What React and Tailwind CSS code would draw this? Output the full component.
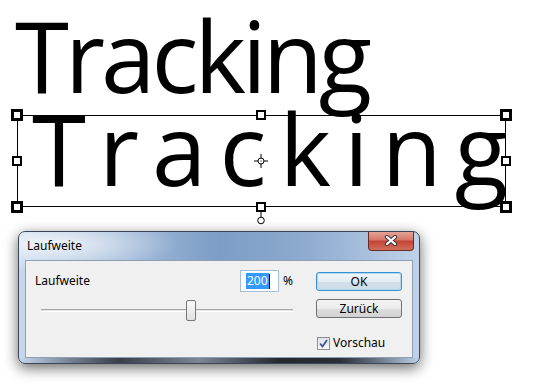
import React from 'react';

const Handle = ({ className }) => (
  <div className={`absolute bg-white border-black ${className}`} />
);

const CloseX = () => (
  <svg width="14" height="11" viewBox="0 0 14 11">
    <path d="M3 2 L11 9 M11 2 L3 9" stroke="#3a3a3a" strokeWidth="4.2" strokeLinecap="round" />
    <path d="M3 2 L11 9 M11 2 L3 9" stroke="#ffffff" strokeWidth="2.2" strokeLinecap="round" />
  </svg>
);

const Check = () => (
  <svg width="9" height="9" viewBox="0 0 9 9">
    <path d="M1 4.5 L3.5 7.5 L8 1" fill="none" stroke="#3f5592" strokeWidth="1.8" />
  </svg>
);

export default function App() {
  return (
    <div className="w-[537px] h-[388px] bg-white overflow-hidden flex flex-col font-['Open_Sans',sans-serif] text-black">
      <div className="pl-[15px] pt-[6px] h-[104px] shrink-0 text-[98px] leading-[98px] tracking-[-4px] whitespace-nowrap">
        Tracking
      </div>

      <div className="relative ml-[17px] mt-[11px] w-[489px] h-[92px] border border-black shrink-0">
        <div className="-mt-[3px] pl-[14px] text-[98px] leading-[70px] tracking-[13px] whitespace-nowrap">
          Tracking
        </div>
        <Handle className="-left-[7px] -top-[7px] w-[12px] h-[12px] border-[3px]" />
        <Handle className="-right-[7px] -top-[7px] w-[12px] h-[12px] border-[3px]" />
        <Handle className="-left-[7px] -bottom-[7px] w-[12px] h-[12px] border-[3px]" />
        <Handle className="-right-[7px] -bottom-[7px] w-[12px] h-[12px] border-[3px]" />
        <Handle className="left-[238px] -top-[6px] w-[10px] h-[10px] border-2" />
        <Handle className="left-[238px] -bottom-[6px] w-[10px] h-[10px] border-2" />
        <Handle className="-left-[6px] top-[40px] w-[10px] h-[10px] border-2" />
        <Handle className="-right-[6px] top-[40px] w-[10px] h-[10px] border-2" />
        <svg className="absolute left-[236px] top-[38px]" width="14" height="14" viewBox="0 0 14 14">
          <circle cx="7" cy="7" r="3" fill="none" stroke="black" strokeWidth="1" />
          <path d="M7 0 V4 M7 10 V14 M0 7 H4 M10 7 H14" stroke="black" strokeWidth="1" />
          <rect x="6.5" y="6.5" width="1" height="1" fill="black" />
        </svg>
        <svg className="absolute left-[238px] top-[95px]" width="10" height="14" viewBox="0 0 10 14">
          <path d="M5 0 V6" stroke="black" strokeWidth="1" />
          <circle cx="5" cy="9.5" r="3.3" fill="white" stroke="black" strokeWidth="1" />
        </svg>
      </div>

      <div className="relative ml-[18px] mt-[24px] w-[402px] h-[133px] shrink-0 rounded-[7px] border border-[#3b4656] shadow-[0_4px_14px_rgba(0,0,0,0.6)] bg-[linear-gradient(to_right,#c6d7ec_0%,#aac1de_22%,#7c9dc6_50%,#8eabd0_72%,#c0d2e8_100%)] flex flex-col overflow-hidden font-['Noto_Sans',sans-serif] text-[12px]">
        <div className="absolute left-0 top-0 w-[160px] h-[40px] bg-[radial-gradient(ellipse_at_20%_30%,rgba(255,255,255,0.75),rgba(255,255,255,0)_70%)]" />
        <div className="relative h-[28px] flex items-start justify-between shrink-0">
          <span className="ml-[8px] mt-[5px]">Laufweite</span>
          <div className="mr-[5px] -mt-px w-[46px] h-[20px] rounded-b-[4px] border border-[#6b2a22] border-t-0 bg-[linear-gradient(to_bottom,#e6a89b_0%,#d77a6c_45%,#c44535_55%,#d0705a_100%)] flex items-center justify-center">
            <CloseX />
          </div>
        </div>

        <div className="relative mx-[6px] h-[98px] shrink-0 border border-[#8ea0b6] bg-[#f0f0f0] flex pl-[9px]">
          <div className="w-[265px] flex flex-col">
            <div className="mt-[9px] h-[22px] flex items-center">
              <span className="w-[205px]">Laufweite</span>
              <div className="w-[39px] h-[22px] border border-[#a4bfdc] bg-white flex items-center pl-[5px]">
                <span className="bg-[#3399ff] text-white leading-[16px] px-[1px]">200</span>
                <span className="w-px h-[15px] bg-black" />
              </div>
              <span className="ml-[4px]">%</span>
            </div>
            <div className="relative mt-[8px] ml-[6px] w-[252px] h-[21px] flex items-center">
              <div className="w-full h-[3px] border-t border-[#a6a6a6] bg-[#e4e4e4] border-b border-b-white" />
              <div className="absolute left-[145px] top-0 w-[10px] h-[21px] rounded-[2px] border border-[#777] bg-[linear-gradient(to_bottom,#fbfbfb,#e0e0e0)]" />
            </div>
          </div>
          <div className="ml-[16px] w-[86px] flex flex-col">
            <div className="mt-[11px] h-[19px] rounded-[3px] border border-[#3c8fd0] bg-[linear-gradient(to_bottom,#f1f6fa_0%,#e4edf4_50%,#d3e0ea_51%,#cddbe6_100%)] shadow-[inset_0_0_0_1px_#a9dbf6] flex items-center justify-center">
              OK
            </div>
            <div className="mt-[8px] h-[19px] rounded-[3px] border border-[#707070] bg-[linear-gradient(to_bottom,#f4f4f4_0%,#ebebeb_50%,#dddddd_51%,#d2d2d2_100%)] flex items-center justify-center">
              Zurück
            </div>
            <div className="mt-[16px] flex items-center">
              <div className="ml-[1px] w-[13px] h-[13px] border border-[#8f8f8f] bg-[linear-gradient(to_bottom,#dde3ea,#f5f7f9)] flex items-center justify-center">
                <Check />
              </div>
              <span className="ml-[3px]">Vorschau</span>
            </div>
          </div>
        </div>

        <div className="flex-1 bg-[linear-gradient(to_right,rgba(180,200,225,0)_0%,#3a3f48_25%,#7c8696_45%,#24282f_65%,#2a2e36_80%,rgba(150,175,210,0)_100%)]" />
      </div>
    </div>
  );
}
